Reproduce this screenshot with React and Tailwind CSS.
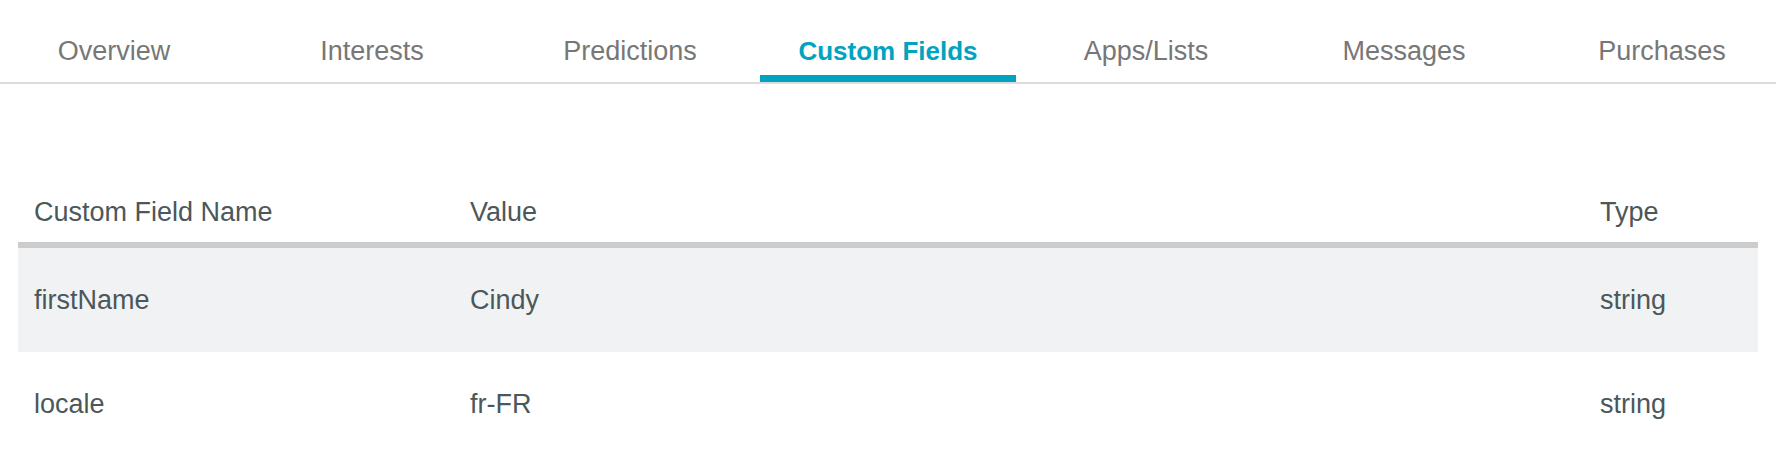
const tabs = [
  "Overview",
  "Interests",
  "Predictions",
  "Custom Fields",
  "Apps/Lists",
  "Messages",
  "Purchases",
];

const rows = [
  { name: "firstName", value: "Cindy", type: "string" },
  { name: "locale", value: "fr-FR", type: "string" },
];

export default function App() {
  const active = "Custom Fields";

  return (
    <div
      className="min-h-screen w-full overflow-hidden bg-white"
      style={{ fontFamily: '"Liberation Sans", Arial, sans-serif' }}
    >
      {/* tab bar */}
      <div className="flex h-[84px] justify-center gap-[2px] border-b-2 border-[#dcdcdc]">
        {tabs.map((tab) => (
          <div
            key={tab}
            className={
              tab === active
                ? "h-full w-[256px] shrink-0 border-b-[7px] border-[#00a3c0] pt-[36px] text-center text-[26px] font-bold leading-[30px] text-[#00a3c0]"
                : "h-full w-[256px] shrink-0 border-b-[7px] border-transparent pt-[36px] text-center text-[27px] leading-[30px] text-[#777777]"
            }
          >
            {tab}
          </div>
        ))}
      </div>

      {/* custom fields table */}
      <div className="mx-[18px] mt-[97px] text-[27px] leading-[30px] text-[#4c575a]">
        <div className="grid h-[67px] grid-cols-[436px_1fr_174px] items-center border-b-[6px] border-[#cccccc]">
          <div className="px-[16px]">Custom Field Name</div>
          <div className="px-[16px]">Value</div>
          <div className="px-[16px]">Type</div>
        </div>

        {rows.map((row, i) => (
          <div
            key={row.name}
            className={
              i % 2 === 0
                ? "grid h-[104px] grid-cols-[436px_1fr_174px] items-center bg-[#f1f2f4]"
                : "grid h-[104px] grid-cols-[436px_1fr_174px] items-center"
            }
          >
            <div className="px-[16px]">{row.name}</div>
            <div className="px-[16px]">{row.value}</div>
            <div className="px-[16px]">{row.type}</div>
          </div>
        ))}
      </div>
    </div>
  );
}
